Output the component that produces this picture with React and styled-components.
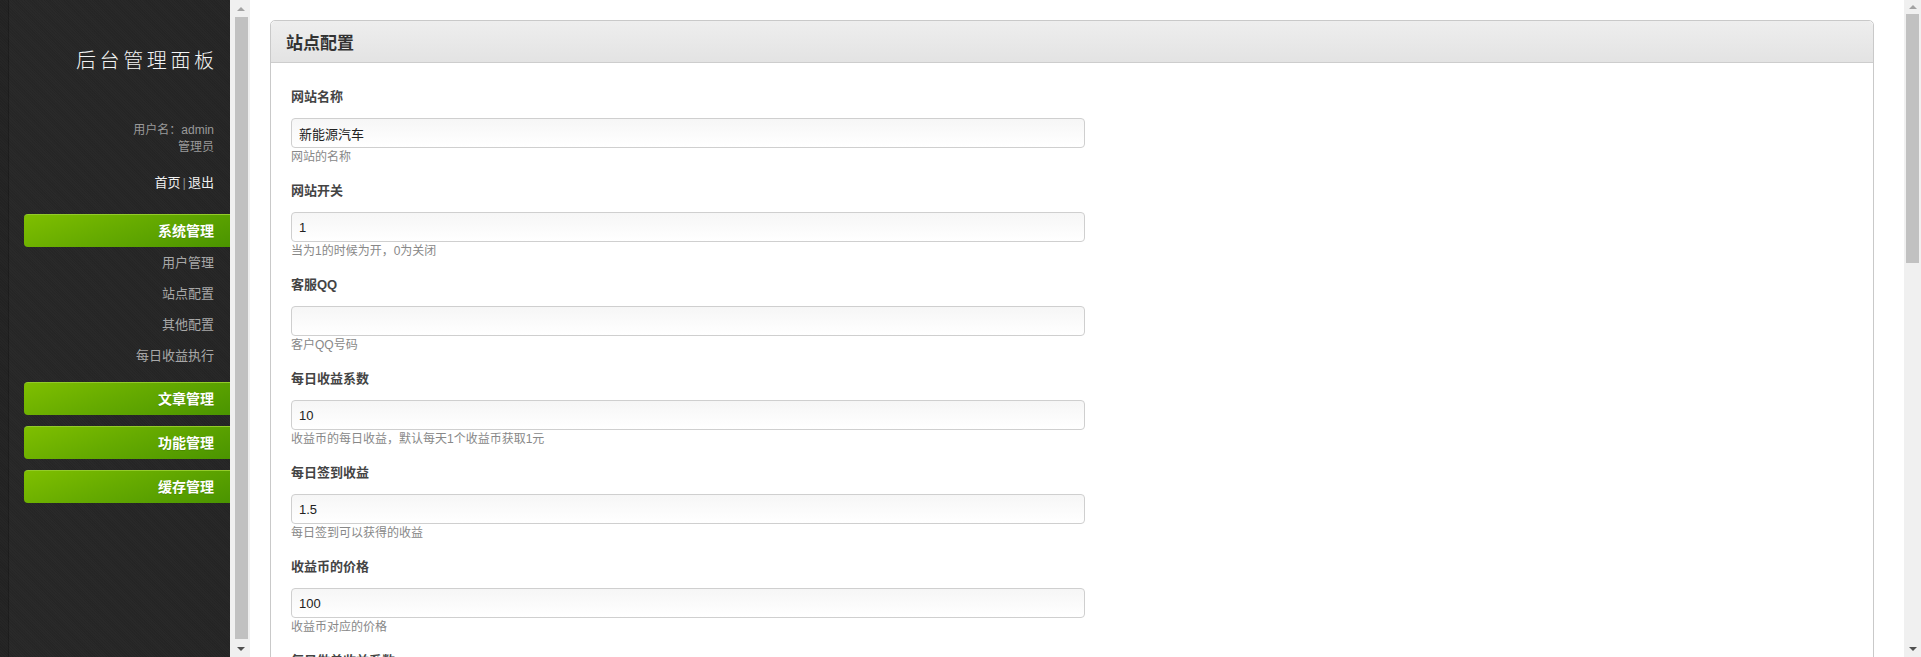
import React from "react";
import styled, { createGlobalStyle } from "styled-components";

const GlobalStyle = createGlobalStyle`
  html, body { margin: 0; padding: 0; height: 100%; overflow: hidden; background: #fff; }
  body { font-family: "Liberation Sans", "Noto Sans CJK SC", Arial, sans-serif; }
  #root { height: 100%; }
  * { box-sizing: border-box; }
`;

const Frame = styled.div`
  display: flex;
  height: 657px;
  width: 100%;
  overflow: hidden;
`;

const Sidebar = styled.aside`
  width: 230px;
  flex: 0 0 230px;
  height: 100%;
  padding: 45px 0 0 24px;
  display: flex;
  flex-direction: column;
  align-items: stretch;
  text-align: right;
  background:
    repeating-linear-gradient(45deg, rgba(255,255,255,0.012) 0 1px, rgba(0,0,0,0.02) 1px 2px),
    linear-gradient(to right, #232323 0, #232323 8px, #1c1c1c 8px, #1c1c1c 9px, #272727 9px, #252525 100%);
`;

const Logo = styled.h1`
  margin: 0;
  padding-right: 16px;
  font-family: "Noto Sans CJK SC", sans-serif;
  font-weight: 300;
  font-size: 20px;
  line-height: 30px;
  letter-spacing: 3.6px;
  margin-right: -3.6px;
  color: #f4f4f4;
`;

const UserInfo = styled.div`
  margin-top: 47px;
  padding-right: 16px;
  font-size: 12px;
  line-height: 17px;
  color: #9a9a9a;
`;

const Links = styled.div`
  margin-top: 17px;
  padding-right: 16px;
  font-size: 13px;
  line-height: 20px;
  color: #f0f0f0;
`;

const Sep = styled.span`
  color: #888;
  margin: 0 2px;
`;

const Menu = styled.nav`
  margin-top: 21px;
  display: flex;
  flex-direction: column;
  gap: 11px;
`;

const MenuGroup = styled.div`
  display: flex;
  flex-direction: column;
`;

const MenuButton = styled.div`
  height: 33px;
  line-height: 32px;
  padding-right: 16px;
  border-radius: 4px 0 0 4px;
  border-top: 1px solid #93cb2a;
  font-size: 14px;
  font-weight: bold;
  color: #fff;
  text-shadow: 0 1px 0 rgba(0,0,0,0.15);
  background: linear-gradient(160deg, #7fbf00 0%, #66ab00 45%, #4a9400 100%);
`;

const SubItem = styled.div`
  height: 31px;
  line-height: 31px;
  padding-right: 16px;
  font-size: 13px;
  color: #a8a8a8;
`;

const ScrollTrack = styled.div`
  width: ${(p) => p.$w}px;
  flex: 0 0 ${(p) => p.$w}px;
  height: 100%;
  background: #f0f0f0;
  display: flex;
  flex-direction: column;
  align-items: center;
`;

const ArrowBtn = styled.div`
  height: ${(p) => p.$h}px;
  flex: 0 0 ${(p) => p.$h}px;
  width: 100%;
  display: flex;
  align-items: center;
  justify-content: center;
  padding-left: ${(p) => p.$shift || 0}px;
`;

const Tri = styled.span`
  width: 0;
  height: 0;
  border-left: 4px solid transparent;
  border-right: 4px solid transparent;
  ${(p) =>
    p.$down
      ? `border-top: 4px solid ${p.$color};`
      : `border-bottom: 4px solid ${p.$color};`}
`;

const Thumb = styled.div`
  width: 13px;
  margin-left: ${(p) => p.$shift || 0}px;
  height: ${(p) => p.$h}px;
  flex: 0 0 ${(p) => p.$h}px;
  background: #c1c1c1;
`;

const Spacer = styled.div`
  flex: 1;
`;

const Main = styled.main`
  flex: 1;
  min-width: 0;
  height: 100%;
  overflow: hidden;
  padding: 20px 30px 0 20px;
  background: #fff;
`;

const Panel = styled.section`
  border: 1px solid #c9c9c9;
  border-radius: 5px 5px 0 0;
  background: #fff;
`;

const PanelHeader = styled.header`
  height: 42px;
  border-bottom: 1px solid #cdcdcd;
  border-radius: 5px 5px 0 0;
  background: linear-gradient(to bottom, #eeeeee, #e3e3e3);
  display: flex;
  align-items: center;
  padding-left: 15px;
`;

const PanelTitle = styled.h2`
  margin: 0;
  font-size: 17px;
  font-weight: bold;
  color: #333;
`;

const PanelBody = styled.div`
  padding: 24px 20px 0 20px;
`;

const Field = styled.div`
  margin-bottom: 15px;
`;

const Label = styled.label`
  display: block;
  font-size: 13px;
  line-height: 20px;
  font-weight: bold;
  color: #444;
  margin-bottom: 11px;
`;

const Input = styled.input`
  display: block;
  width: 794px;
  height: 30px;
  padding: 0 7px;
  border: 1px solid #cfcfcf;
  border-radius: 4px;
  background: linear-gradient(to bottom, #f6f6f6, #ffffff);
  font-family: "Liberation Sans", "Noto Sans CJK SC", Arial, sans-serif;
  font-size: 13px;
  color: #222;
  outline: none;
`;

const Help = styled.div`
  font-size: 12px;
  line-height: 18px;
  color: #888;
`;

const fields = [
  { label: "网站名称", value: "新能源汽车", help: "网站的名称" },
  { label: "网站开关", value: "1", help: "当为1的时候为开，0为关闭" },
  { label: "客服QQ", value: "", help: "客户QQ号码" },
  { label: "每日收益系数", value: "10", help: "收益币的每日收益，默认每天1个收益币获取1元" },
  { label: "每日签到收益", value: "1.5", help: "每日签到可以获得的收益" },
  { label: "收益币的价格", value: "100", help: "收益币对应的价格" },
  { label: "每日做单收益系数", value: "", help: "" },
];

const menus = [
  { title: "系统管理", items: ["用户管理", "站点配置", "其他配置", "每日收益执行"] },
  { title: "文章管理", items: [] },
  { title: "功能管理", items: [] },
  { title: "缓存管理", items: [] },
];

function Scrollbar({ width, thumbTop, thumbHeight, shift }) {
  return (
    <ScrollTrack $w={width}>
      <ArrowBtn $h={thumbTop} $shift={shift}>
        <Tri $color="#a3a3a3" />
      </ArrowBtn>
      <Thumb $h={thumbHeight} $shift={shift} />
      <Spacer />
      <ArrowBtn $h={17} $shift={shift}>
        <Tri $down $color="#505050" />
      </ArrowBtn>
    </ScrollTrack>
  );
}

export default function App() {
  return (
    <>
      <GlobalStyle />
      <Frame>
        <Sidebar>
          <Logo>后台管理面板</Logo>
          <UserInfo>
            <div>用户名：admin</div>
            <div>管理员</div>
          </UserInfo>
          <Links>
            首页<Sep>|</Sep>退出
          </Links>
          <Menu>
            {menus.map((m) => (
              <MenuGroup key={m.title}>
                <MenuButton>{m.title}</MenuButton>
                {m.items.map((it) => (
                  <SubItem key={it}>{it}</SubItem>
                ))}
              </MenuGroup>
            ))}
          </Menu>
        </Sidebar>
        <Scrollbar width={20} thumbTop={17} thumbHeight={622} shift={2} />
        <Main>
          <Panel>
            <PanelHeader>
              <PanelTitle>站点配置</PanelTitle>
            </PanelHeader>
            <PanelBody>
              {fields.map((f) => (
                <Field key={f.label}>
                  <Label>{f.label}</Label>
                  <Input defaultValue={f.value} readOnly />
                  <Help>{f.help}</Help>
                </Field>
              ))}
            </PanelBody>
          </Panel>
        </Main>
        <Scrollbar width={17} thumbTop={14} thumbHeight={249} shift={0} />
      </Frame>
    </>
  );
}
